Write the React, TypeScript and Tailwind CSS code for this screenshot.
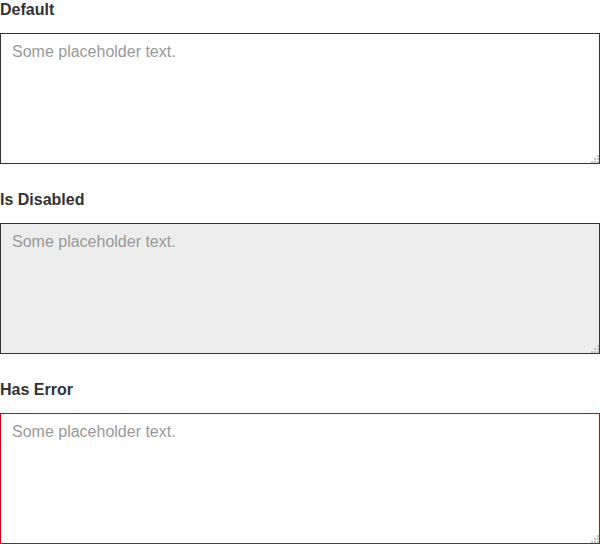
export default function App() {
  var fields = [
    { label: 'Default', disabled: false, error: false },
    { label: 'Is Disabled', disabled: true, error: false },
    { label: 'Has Error', disabled: false, error: true },
  ]

  return (
    <div className="w-[600px] bg-white font-['Liberation_Sans',Arial,sans-serif]">
      {fields.map(function(f, i) {
        return (
          <div key={f.label} className={i > 0 ? 'mt-[26px]' : ''}>
            <label className="block pt-[1px] text-[16px] leading-[18px] font-bold text-[#333] mb-[14px]">{f.label}</label>
            <div className="relative">
              <textarea
                disabled={f.disabled}
                placeholder="Some placeholder text."
                className={
                  'block w-full h-[131px] border px-[11px] py-[8px] text-[16px] leading-[20px] text-[#333] placeholder:text-[#999] outline-none resize-none ' +
                  (f.error ? 'border-[#d0021b]' : 'border-[#333]') +
                  (f.disabled ? ' bg-[#ededed]' : ' bg-white')
                }
              />
              {/* resize grip */}
              <svg className="absolute right-[1px] bottom-[1px] pointer-events-none" width="8" height="8" viewBox="0 0 8 8">
                <rect x="6" y="0" width="2" height="2" fill="#c4c4c4" />
                <rect x="3" y="3" width="2" height="2" fill="#c4c4c4" />
                <rect x="6" y="3" width="2" height="2" fill="#c4c4c4" />
                <rect x="0" y="6" width="2" height="2" fill="#c4c4c4" />
                <rect x="3" y="6" width="2" height="2" fill="#c4c4c4" />
                <rect x="6" y="6" width="2" height="2" fill="#c4c4c4" />
              </svg>
            </div>
          </div>
        )
      })}
    </div>
  )
}
